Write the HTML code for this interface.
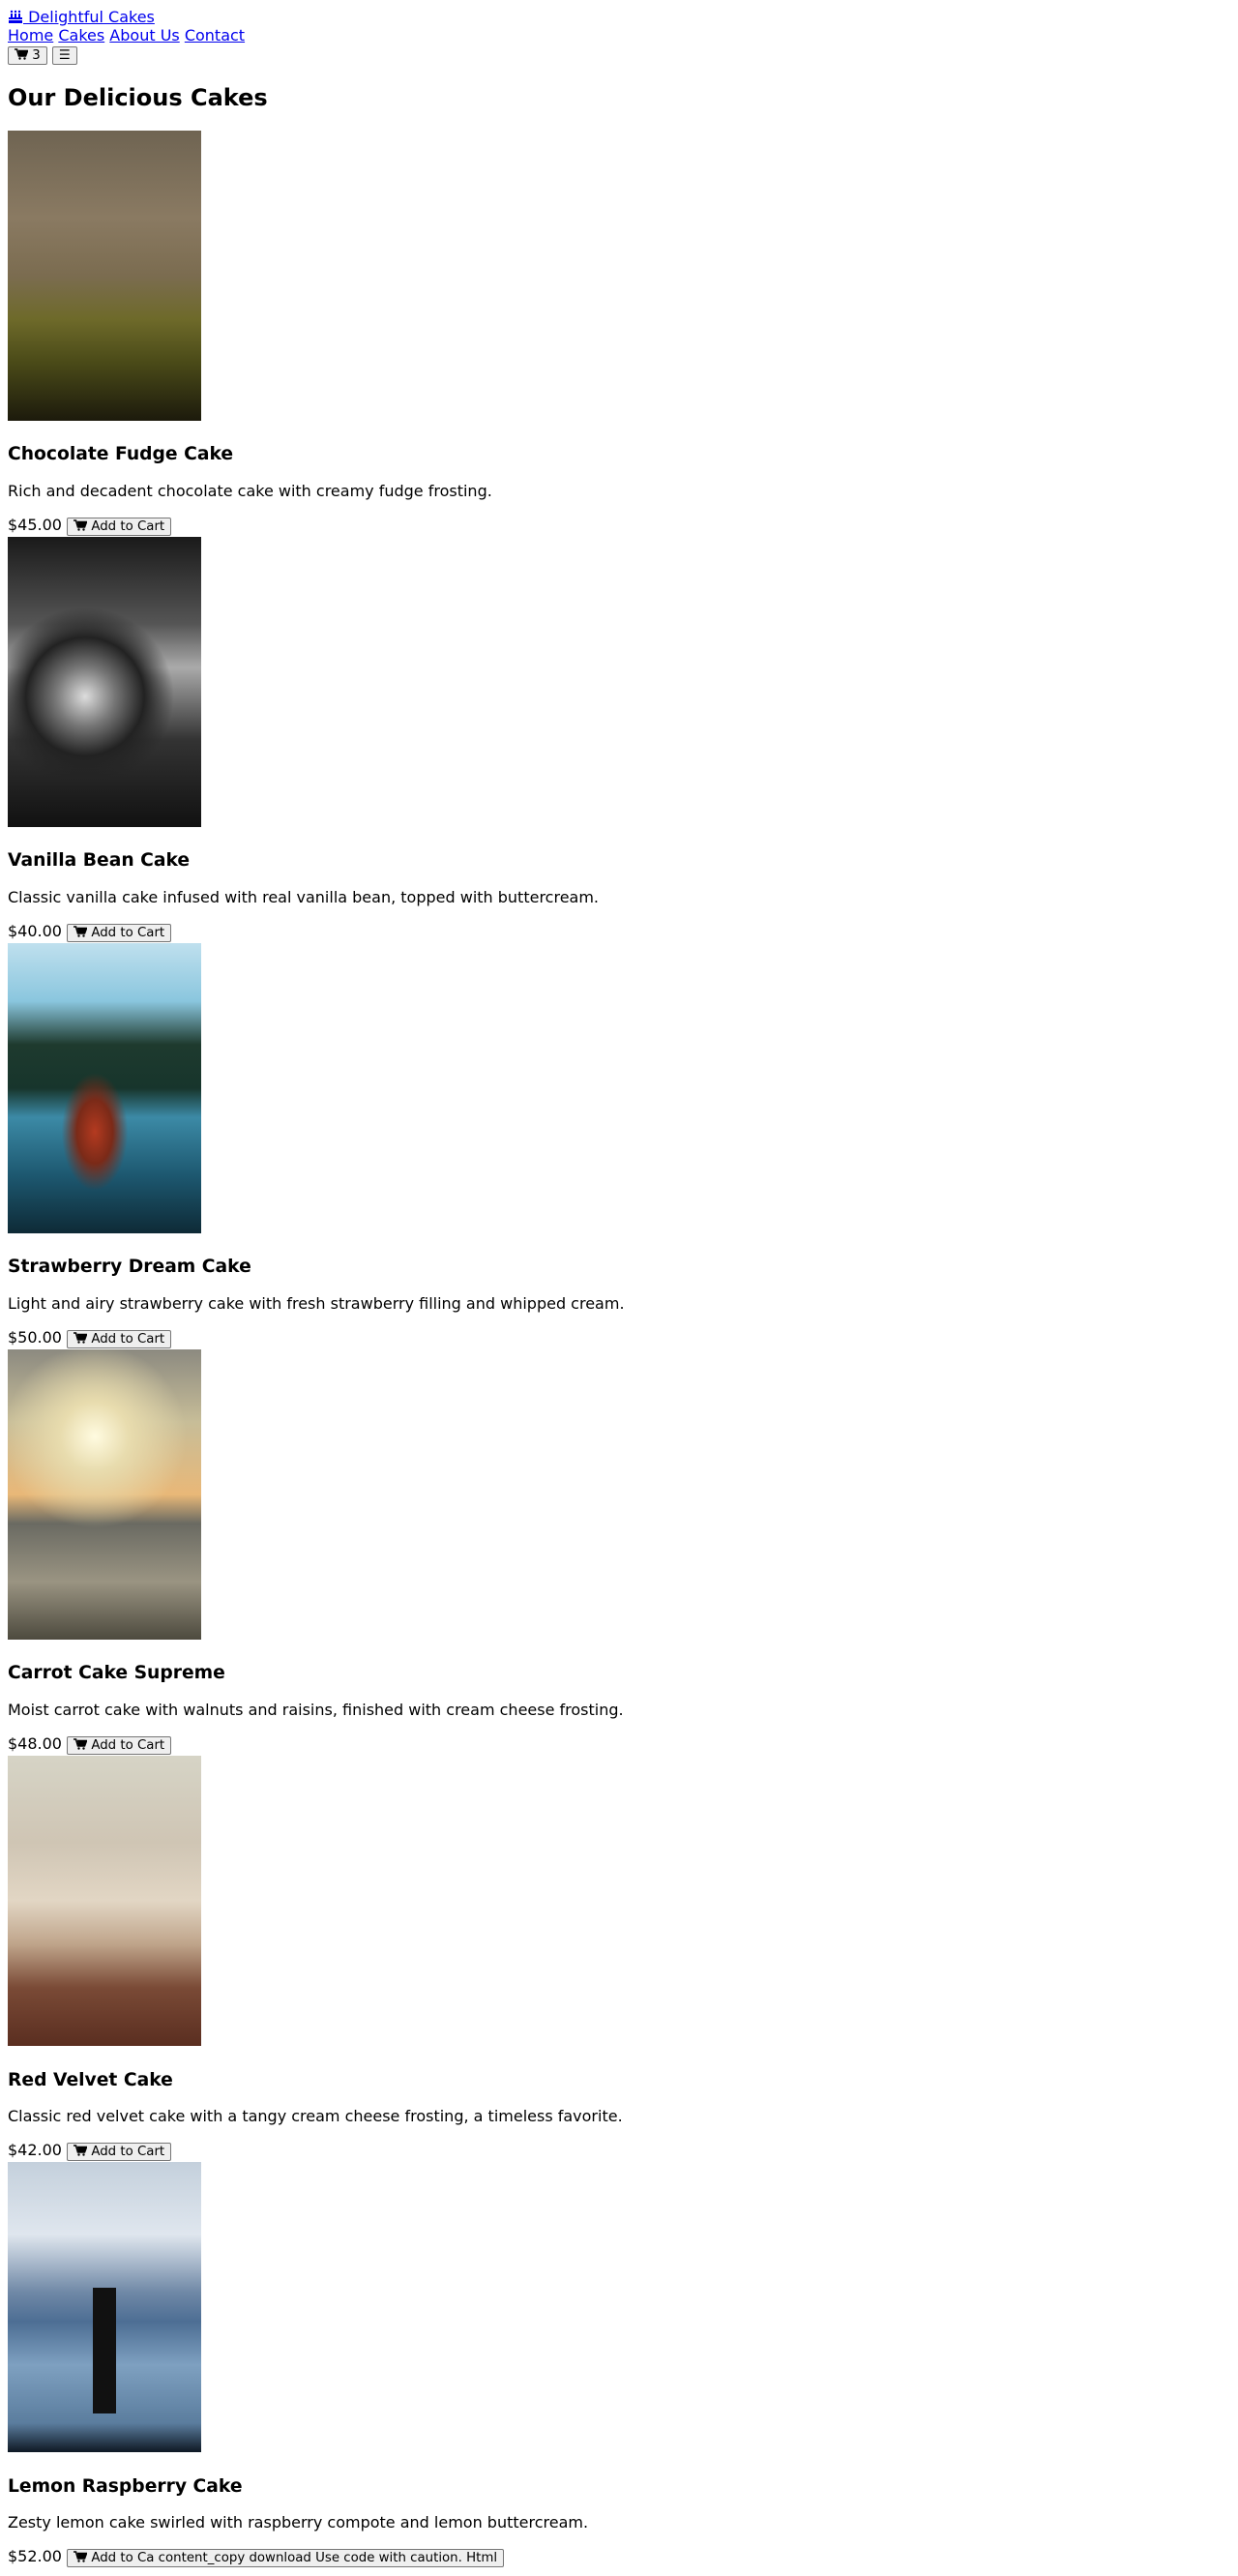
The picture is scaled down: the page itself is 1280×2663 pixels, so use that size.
<!DOCTYPE html>
<html><head><meta charset="utf-8">
<style>
body{margin:8px;font-family:"DejaVu Sans","Liberation Sans",sans-serif;font-size:16px;color:#000;background:#fff}
a{color:#00e}
h1{font-size:1.5em;margin:.83em 0}
h3{font-size:1.17em;margin:1.3em 0 .95em}
p{margin:1em 0}
.pr{padding-bottom:1px}
button{font-family:"DejaVu Sans",sans-serif;font-size:13.33px;padding:1px 6px;border:1px solid #767676;border-radius:2px;background:#efefef;color:#000}
.img{display:block;width:200px;height:300px}
svg{vertical-align:-1px}
</style></head><body>
<header>
<div><a href="#"><svg width="16" height="14" viewBox="0 0 16 14"><rect x="1" y="8" width="14" height="6" fill="#00e"/><rect x="3" y="4" width="2" height="4" fill="#00e"/><rect x="7" y="4" width="2" height="4" fill="#00e"/><rect x="11" y="4" width="2" height="4" fill="#00e"/><circle cx="4" cy="2" r="1.2" fill="#00e"/><circle cx="8" cy="2" r="1.2" fill="#00e"/><circle cx="12" cy="2" r="1.2" fill="#00e"/><rect x="1" y="10" width="14" height="1" fill="#fff"/></svg> Delightful Cakes</a></div>
<nav><a href="#">Home</a> <a href="#">Cakes</a> <a href="#">About Us</a> <a href="#">Contact</a></nav>
<div><button><svg width="14" height="12" viewBox="0 0 14 12"><path d="M0 1h2.5l2 7h7l2-5.5H4" fill="none" stroke="#000" stroke-width="1.6"/><path d="M4 3h9l-1.8 5H5z"/><circle cx="5.5" cy="10.5" r="1.2"/><circle cx="10.5" cy="10.5" r="1.2"/></svg> 3</button> <button>☰</button></div>
</header>
<h1>Our Delicious Cakes</h1>

<div class="img" style="background:linear-gradient(180deg,#6f6452 0%,#8a7a62 30%,#7b6c50 50%,#6e6a2a 65%,#4a4a18 80%,#1c1a0c 100%)"></div>
<h3>Chocolate Fudge Cake</h3>
<p>Rich and decadent chocolate cake with creamy fudge frosting.</p>
<div class="pr">$45.00 <button><svg width="14" height="12" viewBox="0 0 14 12"><path d="M0 1h2.5l2 7h7l2-5.5H4" fill="none" stroke="#000" stroke-width="1.6"/><path d="M4 3h9l-1.8 5H5z"/><circle cx="5.5" cy="10.5" r="1.2"/><circle cx="10.5" cy="10.5" r="1.2"/></svg> Add to Cart</button></div>

<div class="img" style="background:radial-gradient(circle at 40% 55%,#ddd 0,#777 15%,#222 30%,transparent 45%),linear-gradient(180deg,#1a1a1a 0%,#555 30%,#aaa 45%,#333 70%,#111 100%)"></div>
<h3>Vanilla Bean Cake</h3>
<p>Classic vanilla cake infused with real vanilla bean, topped with buttercream.</p>
<div class="pr">$40.00 <button><svg width="14" height="12" viewBox="0 0 14 12"><path d="M0 1h2.5l2 7h7l2-5.5H4" fill="none" stroke="#000" stroke-width="1.6"/><path d="M4 3h9l-1.8 5H5z"/><circle cx="5.5" cy="10.5" r="1.2"/><circle cx="10.5" cy="10.5" r="1.2"/></svg> Add to Cart</button></div>

<div class="img" style="background:radial-gradient(ellipse at 45% 65%,#b43a20 0,#7a2a18 12%,transparent 22%),linear-gradient(180deg,#bfe0ee 0%,#8ac6de 20%,#1e3a2e 35%,#17352c 50%,#3c8aa6 60%,#1d5870 80%,#0e2a36 100%)"></div>
<h3>Strawberry Dream Cake</h3>
<p>Light and airy strawberry cake with fresh strawberry filling and whipped cream.</p>
<div class="pr">$50.00 <button><svg width="14" height="12" viewBox="0 0 14 12"><path d="M0 1h2.5l2 7h7l2-5.5H4" fill="none" stroke="#000" stroke-width="1.6"/><path d="M4 3h9l-1.8 5H5z"/><circle cx="5.5" cy="10.5" r="1.2"/><circle cx="10.5" cy="10.5" r="1.2"/></svg> Add to Cart</button></div>

<div class="img" style="background:radial-gradient(circle at 45% 30%,#fffbe0 0,#e8dcae 15%,transparent 40%),linear-gradient(180deg,#8c8a80 0%,#c7bd98 25%,#e9b878 50%,#6a6a62 60%,#9a9482 80%,#4d4a3e 100%)"></div>
<h3>Carrot Cake Supreme</h3>
<p>Moist carrot cake with walnuts and raisins, finished with cream cheese frosting.</p>
<div class="pr">$48.00 <button><svg width="14" height="12" viewBox="0 0 14 12"><path d="M0 1h2.5l2 7h7l2-5.5H4" fill="none" stroke="#000" stroke-width="1.6"/><path d="M4 3h9l-1.8 5H5z"/><circle cx="5.5" cy="10.5" r="1.2"/><circle cx="10.5" cy="10.5" r="1.2"/></svg> Add to Cart</button></div>

<div class="img" style="background:linear-gradient(180deg,#d6d4c6 0%,#cfc5b4 30%,#e2d6c4 50%,#bfa48a 65%,#7a4a36 80%,#5a2e20 100%)"></div>
<h3>Red Velvet Cake</h3>
<p>Classic red velvet cake with a tangy cream cheese frosting, a timeless favorite.</p>
<div class="pr">$42.00 <button><svg width="14" height="12" viewBox="0 0 14 12"><path d="M0 1h2.5l2 7h7l2-5.5H4" fill="none" stroke="#000" stroke-width="1.6"/><path d="M4 3h9l-1.8 5H5z"/><circle cx="5.5" cy="10.5" r="1.2"/><circle cx="10.5" cy="10.5" r="1.2"/></svg> Add to Cart</button></div>

<div class="img" style="background:linear-gradient(90deg,transparent 44%,#111 44%,#111 56%,transparent 56%) 0 130px/100% 130px no-repeat,linear-gradient(180deg,#c4d0dc 0%,#dfe6ee 25%,#6f88a6 45%,#4d6e94 55%,#7ea0c0 70%,#5b7d9e 90%,#0e1824 100%)"></div>
<h3>Lemon Raspberry Cake</h3>
<p>Zesty lemon cake swirled with raspberry compote and lemon buttercream.</p>
<div class="pr">$52.00 <button><svg width="14" height="12" viewBox="0 0 14 12"><path d="M0 1h2.5l2 7h7l2-5.5H4" fill="none" stroke="#000" stroke-width="1.6"/><path d="M4 3h9l-1.8 5H5z"/><circle cx="5.5" cy="10.5" r="1.2"/><circle cx="10.5" cy="10.5" r="1.2"/></svg> Add to Ca content_copy download Use code with caution. Html</button></div>
</body></html>
